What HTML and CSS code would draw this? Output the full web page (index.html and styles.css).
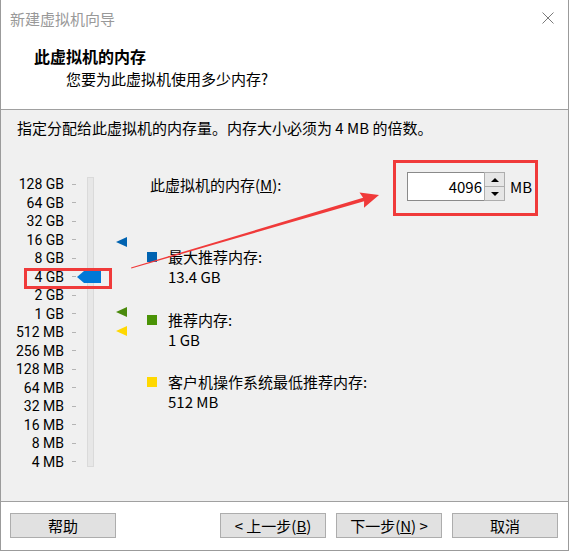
FILE: index.html
```html
<!DOCTYPE html>
<html lang="zh-CN">
<head>
    <meta charset="UTF-8">
    <title>新建虚拟机向导</title>
    <link rel="stylesheet" href="styles.css">
</head>
<body>
    <div class="dialog">
        <div class="titlebar">
            <span class="title">新建虚拟机向导</span>
            <svg class="close" width="12" height="12" viewBox="0 0 12 12">
                <path d="M0.5 0.5 L11.5 11.5 M11.5 0.5 L0.5 11.5" stroke="#7a7a7a" stroke-width="1" fill="none"/>
            </svg>
        </div>

        <div class="header">
            <h1>此虚拟机的内存</h1>
            <p>您要为此虚拟机使用多少内存?</p>
        </div>

        <div class="body">
            <p class="intro">指定分配给此虚拟机的内存量。内存大小必须为 4 MB 的倍数。</p>

            <div class="memory">
                <div class="slider">
                    <ul class="scale">
                        <li>128 GB</li>
                        <li>64 GB</li>
                        <li>32 GB</li>
                        <li>16 GB</li>
                        <li>8 GB</li>
                        <li>4 GB</li>
                        <li>2 GB</li>
                        <li>1 GB</li>
                        <li>512 MB</li>
                        <li>256 MB</li>
                        <li>128 MB</li>
                        <li>64 MB</li>
                        <li>32 MB</li>
                        <li>16 MB</li>
                        <li>8 MB</li>
                        <li>4 MB</li>
                    </ul>
                    <div class="track"></div>
                    <span class="pointer max"></span>
                    <span class="pointer rec"></span>
                    <span class="pointer min"></span>
                    <svg class="thumb" width="24" height="12" viewBox="0 0 24 12">
                        <polygon points="0,6 7,0 24,0 24,12 7,12" fill="#0078d7"/>
                    </svg>
                </div>

                <div class="settings">
                    <div class="size-row">
                        <label for="mem">此虚拟机的内存(<u>M</u>):</label>
                        <div class="spin">
                            <input id="mem" type="text" value="4096">
                            <div class="spin-buttons">
                                <span class="up"></span>
                                <span class="down"></span>
                            </div>
                        </div>
                        <span class="unit">MB</span>
                    </div>

                    <ul class="legend">
                        <li><span class="swatch blue"></span><span>最大推荐内存:</span><span></span><span>13.4 GB</span></li>
                        <li><span class="swatch green"></span><span>推荐内存:</span><span></span><span>1 GB</span></li>
                        <li><span class="swatch yellow"></span><span>客户机操作系统最低推荐内存:</span><span></span><span>512 MB</span></li>
                    </ul>
                </div>
            </div>
        </div>

        <div class="footer">
            <button>帮助</button>
            <button class="back">&lt; 上一步(<u>B</u>)</button>
            <button>下一步(<u>N</u>) &gt;</button>
            <button>取消</button>
        </div>

        <!-- annotations drawn over the screenshot -->
        <div class="mark mark-slider"></div>
        <div class="mark mark-input"></div>
        <svg class="arrow" width="573" height="553" viewBox="0 0 573 553">
            <polygon points="131,267.5 131.3,268.5 364.1,201.2 364,207.8 379,195 359.5,192.4 363.1,197.8" fill="#f03a3a"/>
        </svg>
    </div>
</body>
</html>
```

FILE: styles.css
```css
body {
    margin: 0;
    font-family: "Noto Sans CJK SC", sans-serif;
    font-size: 15px;
    color: #000;
    background: #fff;
}
ul {
    list-style: none;
    margin: 0;
    padding: 0;
}
.dialog {
    position: relative;
    width: 569px;
    height: 551px;
    box-sizing: border-box;
    border: 1px solid #9b9b9b;
    border-top: none;
    display: flex;
    flex-direction: column;
    background: #fff;
}
.titlebar {
    height: 38px;
    flex: none;
    display: flex;
    align-items: center;
    justify-content: space-between;
    padding: 0 14px 0 9px;
}
.titlebar .title {
    color: #999;
    line-height: 20px;
}
.close {
    margin-top: -2px;
}
.header {
    height: 72px;
    flex: none;
    box-sizing: border-box;
    border-bottom: 1px solid #a0a0a0;
    padding: 8px 0 0 33px;
}
.header h1 {
    margin: 0;
    font-size: 16px;
    font-weight: bold;
    line-height: 20px;
}
.header p {
    margin: 3px 0 0 32px;
    line-height: 20px;
}
.body {
    flex: 1;
    background: #f0f0f0;
    padding-top: 8px;
}
.intro {
    margin: 0 0 0 16px;
    line-height: 20px;
}
.memory {
    display: flex;
    margin-top: 34px;
}
.slider {
    position: relative;
    width: 146px;
    display: flex;
    align-items: flex-start;
}
.scale {
    width: 75px;
    padding-top: 3px;
    font-family: Roboto, "Liberation Sans", sans-serif;
    font-size: 14px;
}
.scale li {
    display: flex;
    justify-content: flex-end;
    align-items: center;
    gap: 8px;
    height: 18.5px;
    line-height: 18.5px;
}
.scale li::after {
    content: "";
    width: 4px;
    height: 1px;
    background: #b4b4b4;
}
.track {
    width: 5px;
    height: 288px;
    margin: 5px 0 0 11px;
    border: 1px solid #dadada;
    background: #e7e7e7;
}
.pointer {
    position: absolute;
    left: 115px;
    width: 0;
    height: 0;
    border-top: 5px solid transparent;
    border-bottom: 5px solid transparent;
    border-right: 11px solid #0063b1;
}
.pointer.max {
    top: 65px;
}
.pointer.rec {
    top: 135px;
    border-right-color: #4a8a0c;
}
.pointer.min {
    top: 154px;
    border-right-color: #ffd800;
}
.thumb {
    position: absolute;
    left: 76px;
    top: 99px;
}
.settings {
    flex: 1;
}
.size-row {
    display: flex;
    align-items: center;
    height: 29px;
}
.size-row label {
    width: 257px;
    padding-left: 3px;
    line-height: 20px;
    margin-top: -3px;
}
.spin {
    display: flex;
    width: 98px;
    height: 29px;
}
.spin input {
    width: 0;
    flex: 1;
    box-sizing: border-box;
    border: 1px solid #8a8a8a;
    border-right: none;
    background: #fff;
    font: inherit;
    text-align: right;
    padding: 0 2px 0 0;
    margin: 0;
}
.spin-buttons {
    width: 21px;
    display: flex;
    flex-direction: column;
}
.spin-buttons span {
    flex: 1;
    display: flex;
    align-items: center;
    justify-content: center;
    border: 1px solid #adadad;
    background: #e6e6e6;
}
.spin-buttons .down {
    border-top: none;
}
.spin-buttons span::before {
    content: "";
    border-left: 4px solid transparent;
    border-right: 4px solid transparent;
}
.spin-buttons .up::before {
    border-bottom: 4px solid #000;
}
.spin-buttons .down::before {
    border-top: 4px solid #000;
}
.unit {
    margin-left: 5px;
    line-height: 20px;
}
.legend {
    margin-top: 46px;
}
.legend li {
    display: grid;
    grid-template-columns: 21px auto;
    line-height: 20px;
    margin-bottom: 22.5px;
}
.swatch {
    width: 10px;
    height: 10px;
    margin-top: 5px;
}
.swatch.blue {
    background: #0063b1;
}
.swatch.green {
    background: #4a9306;
}
.swatch.yellow {
    background: #ffd800;
}
.footer {
    height: 49px;
    flex: none;
    box-sizing: border-box;
    border-top: 1px solid #a0a0a0;
    padding: 11px 10px 0 9px;
    display: flex;
    align-items: flex-start;
    gap: 10px;
}
.footer button {
    width: 106px;
    height: 25px;
    padding: 0;
    border: 1px solid #adadad;
    background: #e1e1e1;
    font: inherit;
    line-height: 22px;
    color: #000;
}
.footer .back {
    margin-left: auto;
}
.mark {
    position: absolute;
    box-sizing: border-box;
    border: 3px solid #f03a3a;
}
.mark-slider {
    left: 23px;
    top: 268px;
    width: 88px;
    height: 21px;
}
.mark-input {
    left: 392px;
    top: 160px;
    width: 145px;
    height: 56px;
}
.arrow {
    position: absolute;
    left: -1px;
    top: 0;
    pointer-events: none;
}
```
